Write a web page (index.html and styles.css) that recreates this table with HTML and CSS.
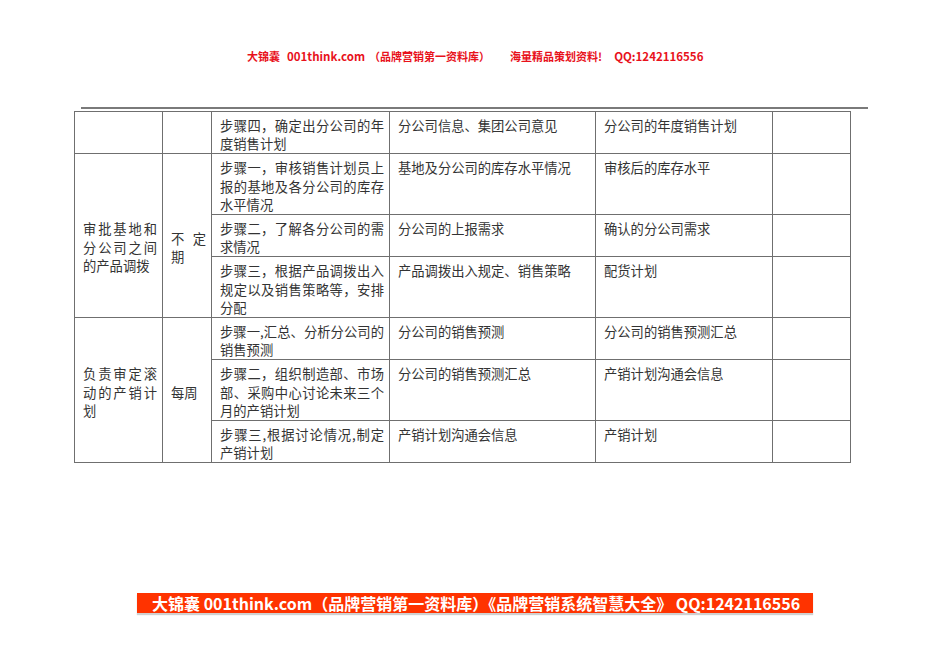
FILE: index.html
```html
<!DOCTYPE html>
<html lang="zh-CN">
<head>
<meta charset="utf-8">
<title>产销计划</title>
<link rel="stylesheet" href="styles.css">
</head>
<body>
<div class="page">
  <div class="header">
    <span>大锦囊</span><span class="h1">001think.com</span><span class="h2">（品牌营销第一资料库）</span><span class="h3">海量精品策划资料!</span><span class="h4">QQ:1242116556</span>
  </div>
  <div class="rule"></div>
  <table class="grid">
    <colgroup>
      <col class="c1"><col class="c2"><col class="c3"><col class="c4"><col class="c5"><col class="c6">
    </colgroup>
    <tr>
      <td></td><td></td>
      <td class="step">步骤四，确定出分公司的年度销售计划</td>
      <td>分公司信息、集团公司意见</td>
      <td>分公司的年度销售计划</td>
      <td></td>
    </tr>
    <tr>
      <td rowspan="3" class="name shift">审批基地和分公司之间的产品调拨</td>
      <td rowspan="3" class="freq shift">不定期</td>
      <td class="step">步骤一，审核销售计划员上报的基地及各分公司的库存水平情况</td>
      <td>基地及分公司的库存水平情况</td>
      <td>审核后的库存水平</td>
      <td></td>
    </tr>
    <tr>
      <td class="step">步骤二，了解各分公司的需求情况</td>
      <td>分公司的上报需求</td>
      <td>确认的分公司需求</td>
      <td></td>
    </tr>
    <tr>
      <td class="step">步骤三，根据产品调拨出入规定以及销售策略等，安排分配</td>
      <td>产品调拨出入规定、销售策略</td>
      <td>配货计划</td>
      <td></td>
    </tr>
    <tr>
      <td rowspan="3" class="name">负责审定滚动的产销计划</td>
      <td rowspan="3" class="freq">每周</td>
      <td class="step">步骤一,汇总、分析分公司的销售预测</td>
      <td>分公司的销售预测</td>
      <td>分公司的销售预测汇总</td>
      <td></td>
    </tr>
    <tr>
      <td class="step">步骤二，组织制造部、市场部、采购中心讨论未来三个月的产销计划</td>
      <td>分公司的销售预测汇总</td>
      <td>产销计划沟通会信息</td>
      <td></td>
    </tr>
    <tr>
      <td class="step">步骤三,根据讨论情况,制定产销计划</td>
      <td>产销计划沟通会信息</td>
      <td>产销计划</td>
      <td></td>
    </tr>
  </table>
  <div class="banner">大锦囊 001think.com（品牌营销第一资料库）《品牌营销系统智慧大全》 QQ:1242116556</div>
</div>
</body>
</html>
```

FILE: styles.css
```css
html, body {
  margin: 0;
  padding: 0;
  background: #ffffff;
}

.page {
  width: 950px;
  height: 672px;
  display: flex;
  flex-direction: column;
  font-family: "Noto Sans CJK SC", "Liberation Sans", sans-serif;
}

.header {
  margin-top: 48px;
  height: 16px;
  line-height: 16px;
  font-size: 11px;
  font-weight: bold;
  color: #e8111b;
  white-space: nowrap;
  padding-left: 247px;
}

.header .h1 { margin-left: 7px; font-size: 11.5px; }
.header .h2 { margin-left: 4px; }
.header .h3 { margin-left: 20px; }
.header .h4 { margin-left: 12px; font-size: 11.5px; }

.rule {
  margin-top: 43px;
  margin-left: 81px;
  width: 787px;
  height: 2px;
  background: #7a7a7a;
}

.grid {
  margin-top: 2px;
  margin-left: 74px;
  width: 776px;
  border-collapse: collapse;
  table-layout: fixed;
  font-size: 13.3px;
  line-height: 18.2px;
  color: #333333;
}

.grid .c1 { width: 88px; }
.grid .c2 { width: 49px; }
.grid .c3 { width: 178px; }
.grid .c4 { width: 206px; }
.grid .c5 { width: 177px; }
.grid .c6 { width: 78px; }

.grid td {
  border: 1px solid #6f6f6f;
  padding: 5px 5px 0 8px;
  vertical-align: top;
  text-align: left;
}

.grid td.step {
  text-align: justify;
}

.grid td.name,
.grid td.freq {
  vertical-align: middle;
  text-align: justify;
}

.grid td.shift {
  padding-top: 24px;
}

.banner {
  margin-top: 130px;
  margin-left: 137px;
  width: 676px;
  height: 20px;
  box-sizing: border-box;
  padding-left: 15px;
  background: #ff3300;
  color: #ffffff;
  font-size: 16px;
  font-weight: bold;
  line-height: 20px;
  white-space: nowrap;
  box-shadow: 0 2px 1px #d0d0d0;
}
```
